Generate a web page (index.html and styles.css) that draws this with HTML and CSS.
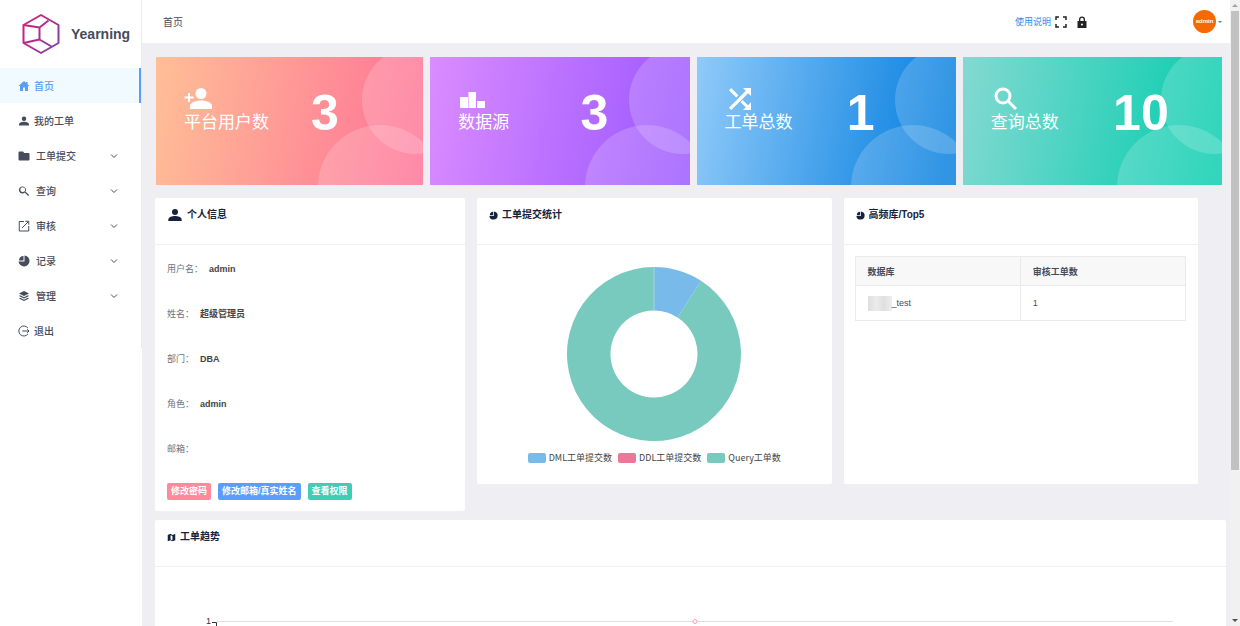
FILE: index.html
```
<!DOCTYPE html>
<html lang="zh-CN">
<head>
<meta charset="utf-8">
<meta name="viewport" content="width=device-width, initial-scale=1.0">
<title>Yearning</title>
<link rel="stylesheet" href="styles.css">
</head>
<body>
<svg class="sprite" aria-hidden="true">
  <symbol id="i-person" viewBox="0 0 24 24"><circle cx="12" cy="7.500" r="4.500"/><path d="M2 21v-2c0-4 6-5.500 10-5.500s10 1.500 10 5.500v2z"/></symbol>
  <symbol id="i-search" viewBox="0 0 24 24"><path d="M16 14.200h-.8l-.4-.4A7 7 0 1 0 14 14.800l.4.4v.8l6 6 1.800-1.800zM9.500 14.200a4.900 4.900 0 1 1 0-9.800 4.900 4.900 0 0 1 0 9.800z"/></symbol>
  <symbol id="i-pie" viewBox="0 0 24 24"><path d="M13 1a11 11 0 1 1-11.900 12H13z"/><path d="M11 2v9H2a9.500 9.500 0 0 1 9-9z"/></symbol>
  <symbol id="i-chevron" viewBox="0 0 10 10"><path d="M2 3.500L5 6.500l3-3" fill="none" stroke="currentColor"/></symbol>
  <symbol id="i-bubbles" viewBox="0 0 120 128"><circle cx="113" cy="43" r="54"/><circle cx="77" cy="130" r="62"/></symbol>
</svg>

<div class="layout">
  <aside class="sidebar">
    <div class="logo">
      <svg class="logo-mark" viewBox="0 0 38 42" fill="none" stroke="url(#lg)" stroke-width="2" stroke-linejoin="round">
        <defs><linearGradient id="lg" gradientUnits="userSpaceOnUse" x1="0" y1="8" x2="38" y2="34"><stop offset="0" stop-color="#d81e78"/><stop offset="1" stop-color="#7c42a4"/></linearGradient></defs>
        <path d="M19 2l17.500 10v18L19 40 1.500 30V12z"/>
        <path d="M1.500 12l16 2.500 9-7M17.500 14.500v12L1.500 30M17.500 26.500l12 7"/>
      </svg>
      <span>Yearning</span>
    </div>
    <nav class="menu">
      <a class="menu-item active" href="#">
        <svg class="icon" viewBox="0 0 24 24"><path d="M12 2L1 12h3v10h6v-7h4v7h6V12h3l-4-3.700V4h-3v1.600z"/></svg>首页</a>
      <a class="menu-item" href="#"><svg class="icon"><use href="#i-person"/></svg>我的工单</a>
      <a class="menu-item sub" href="#">
        <svg class="icon" viewBox="0 0 24 24"><path d="M1 5a2 2 0 0 1 2-2h7l2.500 3H21a2 2 0 0 1 2 2v11a2 2 0 0 1-2 2H3a2 2 0 0 1-2-2z"/></svg>工单提交
        <svg class="chevron"><use href="#i-chevron"/></svg></a>
      <a class="menu-item sub" href="#"><svg class="icon"><use href="#i-search"/></svg>查询
        <svg class="chevron"><use href="#i-chevron"/></svg></a>
      <a class="menu-item sub" href="#">
        <svg class="icon" viewBox="0 0 24 24" fill="none" stroke="currentColor" stroke-width="2"><path d="M12 3H2.500v19h19V12M8 16L21 3M14.500 2.500h7v7"/></svg>审核
        <svg class="chevron"><use href="#i-chevron"/></svg></a>
      <a class="menu-item sub" href="#"><svg class="icon"><use href="#i-pie"/></svg>记录
        <svg class="chevron"><use href="#i-chevron"/></svg></a>
      <a class="menu-item sub" href="#">
        <svg class="icon" viewBox="0 0 24 24"><path d="M12 2L2 7l10 5 10-5z"/><path d="M4.500 10.500L2 12l10 5 10-5-2.500-1.500L12 14.300z"/><path d="M4.500 15.500L2 17l10 5 10-5-2.500-1.500-7.500 3.800z"/></svg>管理
        <svg class="chevron"><use href="#i-chevron"/></svg></a>
      <a class="menu-item" href="#">
        <svg class="icon" viewBox="0 0 24 24" fill="none" stroke="currentColor" stroke-width="2"><path d="M20 6.500A10 10 0 1 0 20 17.500M8.500 12H22M18.500 8.500L22 12l-3.500 3.500"/></svg>退出</a>
    </nav>
  </aside>

  <main class="main">
    <header class="topbar">
      <span class="crumb">首页</span>
      <div class="tools">
        <a class="help" href="#">使用说明</a>
        <button class="tool" type="button" aria-label="全屏"><svg viewBox="0 0 12 12" fill="none" stroke="currentColor" stroke-width="1.500"><path d="M1 4V1h3M8 1h3v3M11 8v3H8M4 11H1V8"/></svg></button>
        <button class="tool lock" type="button" aria-label="锁屏"><svg viewBox="0 0 12 12"><path d="M3 5V3.500a3 3 0 0 1 6 0V5h1.500v7h-9V5zm1.300 0h3.400V3.500a1.700 1.700 0 0 0-3.400 0zM6 7.500a1 1 0 1 0 0 2 1 1 0 0 0 0-2z" fill-rule="evenodd"/></svg></button>
        <button class="user" type="button"><span class="avatar">admin</span><span class="caret"></span></button>
      </div>
    </header>

    <div class="content">
      <section class="cards">
        <div class="card card-users">
          <svg class="bubbles"><use href="#i-bubbles"/></svg>
          <div class="card-label">
            <svg viewBox="0 0 28 24"><circle cx="17" cy="6.500" r="5.500"/><path d="M6 22v-3c0-4 7-5.500 11-5.500s11 1.500 11 5.500v3z"/><path d="M4 6h2v3.500h3.500v2H6V15H4v-3.500H.5v-2H4z"/></svg>
            <span>平台用户数</span>
          </div>
          <strong>3</strong>
        </div>
        <div class="card card-source">
          <svg class="bubbles"><use href="#i-bubbles"/></svg>
          <div class="card-label">
            <svg viewBox="0 0 28 24"><path d="M2 10h8v11H2zM10.500 5h7.500v16h-7.500zM19 14h8v7h-8z"/></svg>
            <span>数据源</span>
          </div>
          <strong>3</strong>
        </div>
        <div class="card card-order">
          <svg class="bubbles"><use href="#i-bubbles"/></svg>
          <div class="card-label">
            <svg viewBox="0 0 28 24"><path d="M6.200 1l7.200 7.200-2.200 2.200L4 3.200zM18 1h8v8l-2.800-2.800L6.200 23 4 20.800 20.800 3.800zM17.600 13l5.400 5.200 3-3V23h-8l2.800-2.800-5.200-5z"/></svg>
            <span>工单总数</span>
          </div>
          <strong>1</strong>
        </div>
        <div class="card card-query">
          <svg class="bubbles"><use href="#i-bubbles"/></svg>
          <div class="card-label">
            <svg viewBox="0 0 28 24" fill="none" stroke="currentColor" stroke-width="3"><circle cx="12" cy="9" r="7"/><path d="M17 14l8 8"/></svg>
            <span>查询总数</span>
          </div>
          <strong>10</strong>
        </div>
      </section>

      <section class="panels">
        <div class="panel">
          <h2 class="panel-head"><svg class="icon-lg"><use href="#i-person"/></svg>个人信息</h2>
          <div class="profile">
            <dl>
              <div><dt>用户名：</dt><dd>admin</dd></div>
              <div><dt>姓名：</dt><dd>超级管理员</dd></div>
              <div><dt>部门：</dt><dd>DBA</dd></div>
              <div><dt>角色：</dt><dd>admin</dd></div>
              <div><dt>邮箱：</dt><dd></dd></div>
            </dl>
            <div class="actions">
              <button class="btn btn-pink" type="button">修改密码</button>
              <button class="btn btn-blue" type="button">修改邮箱/真实姓名</button>
              <button class="btn btn-green" type="button">查看权限</button>
            </div>
          </div>
        </div>

        <div class="panels-right">
          <div class="panel">
            <h2 class="panel-head"><svg class="icon-sm"><use href="#i-pie"/></svg>工单提交统计</h2>
            <div class="pie">
              <svg class="donut" viewBox="0 0 174 174">
                <path fill="#78cabf" d="M134 13.800A87 87 0 1 1 87 0V43.500A43.500 43.500 0 1 0 110.500 50.400z"/>
                <path fill="#78bbea" d="M87 0A87 87 0 0 1 134 13.800L110.500 50.400A43.500 43.500 0 0 0 87 43.500z"/>
                <path stroke="#a3d6dc" d="M87 0v43"/>
              </svg>
              <ul class="legend">
                <li><i class="dml"></i>DML工单提交数</li>
                <li><i class="ddl"></i>DDL工单提交数</li>
                <li><i class="query"></i>Query工单数</li>
              </ul>
            </div>
          </div>

          <div class="panel">
            <h2 class="panel-head"><svg class="icon-sm"><use href="#i-pie"/></svg>高频库/Top5</h2>
            <table class="top5">
              <thead><tr><th>数据库</th><th>审核工单数</th></tr></thead>
              <tbody><tr><td><span class="masked"></span>_test</td><td>1</td></tr></tbody>
            </table>
          </div>
        </div>
      </section>

      <section class="panel trend">
        <h2 class="panel-head"><svg class="icon-sm" viewBox="0 0 24 24"><path fill-rule="evenodd" d="M2 5l7-3 6 3 7-3v17l-7 3-6-3-7 3zm7.500 1v11l5 2V8z"/></svg>工单趋势</h2>
        <svg class="trend-chart" viewBox="0 0 1071 180">
          <text x="51" y="57">1</text>
          <path d="M57 55.500h4.500V180" fill="none" stroke="#333"/>
          <path d="M62 54.500h956" stroke="#ddd"/>
          <circle cx="540" cy="54.500" r="2" fill="#fff" stroke="#f7a1b0"/>
        </svg>
      </section>
    </div>
  </main>

  <div class="scrollbar" aria-hidden="true">
    <span class="arrow up"></span>
    <div class="track"><div class="thumb"></div></div>
    <span class="arrow down"></span>
  </div>
</div>
</body>
</html>
```
FILE: styles.css
```
:root {
  --bg: #efeef2;
  --text: #464c5b;
  --title: #17233d;
  --primary: #5a9cf8;
  --border: #e8eaec;
}
* {
  box-sizing: border-box;
}
body {
  margin: 0;
  background: var(--bg);
  color: var(--text);
  font-family: "Liberation Sans", "Noto Sans CJK SC", sans-serif;
  font-size: 10px;
}
a {
  color: inherit;
  text-decoration: none;
}
button {
  border: none;
  padding: 0;
  background: none;
  font-family: inherit;
  cursor: pointer;
}
svg {
  display: block;
  fill: currentColor;
}
svg[fill="none"] {
  fill: none;
}
.sprite {
  display: none;
}
.layout {
  display: flex;
  height: 100vh;
  overflow: hidden;
}

/* sidebar */
.sidebar {
  width: 142px;
  flex-shrink: 0;
  background: #fff;
}
.logo {
  display: flex;
  align-items: center;
  gap: 11px;
  height: 68px;
  padding-left: 22px;
  border-right: 1px solid var(--border);
  font-size: 14px;
  font-weight: bold;
}
.logo-mark {
  width: 38px;
  height: 42px;
}
.menu {
  border-right: 1px solid var(--border);
}
.menu-item {
  display: flex;
  align-items: center;
  gap: 4px;
  height: 35px;
  padding: 0 22px 0 18px;
  font-weight: 500;
}
.menu-item.sub {
  gap: 6px;
}
.menu-item.active {
  background: #f0faff;
  color: var(--primary);
  border-right: 2px solid var(--primary);
}
.icon {
  width: 12px;
  height: 12px;
}
.chevron {
  width: 10px;
  height: 10px;
  margin-left: auto;
}

/* topbar */
.main {
  flex: 1;
  min-width: 0;
  overflow: hidden;
}
.topbar {
  display: flex;
  align-items: center;
  justify-content: space-between;
  height: 43px;
  padding: 0 8px 0 21px;
  background: #fff;
}
.tools {
  display: flex;
  align-items: center;
}
.help {
  color: #2d8cf0;
  font-size: 9px;
}
.tool {
  width: 12px;
  height: 12px;
  margin-left: 4px;
  color: #222;
}
.tool.lock {
  margin-left: 9px;
}
.user {
  display: flex;
  align-items: center;
  gap: 2px;
  margin-left: 105px;
}
.avatar {
  width: 23px;
  height: 23px;
  border-radius: 50%;
  background: #f56a00;
  color: #fff;
  font-size: 6px;
  font-weight: bold;
  line-height: 23px;
  text-align: center;
}
.caret {
  border: 2px solid transparent;
  border-top-color: #2d8cf0;
  border-bottom: none;
}

/* cards */
.content {
  padding: 14px 4px 0 13px;
}
.cards {
  display: grid;
  grid-template-columns: 267fr 259fr 259fr 259fr;
  gap: 7px;
  padding: 0 4px 0 1px;
}
.card {
  position: relative;
  display: grid;
  grid-template-columns: 58% 42%;
  height: 128px;
  padding: 30px 0 0;
  color: #fff;
}
.card-users { background: linear-gradient(100deg, #ffbf96, #fe7096); }
.card-source { background: linear-gradient(100deg, #da8cff, #9a55ff); }
.card-order { background: linear-gradient(100deg, #90caf9, #047edf 95%); }
.card-query { background: linear-gradient(100deg, #84d9d2, #07cdae 95%); }
.bubbles {
  position: absolute;
  right: 0;
  bottom: 0;
  width: 120px;
  height: 128px;
  fill: #fff;
  fill-opacity: 0.18;
}
.card-label {
  padding-left: 28px;
  font-size: 17px;
  line-height: 24px;
}
.card-label svg {
  width: 28px;
  height: 24px;
}
.card strong {
  font-size: 50px;
  line-height: 52px;
}

/* panels */
.panels {
  display: grid;
  grid-template-columns: 310fr 721fr;
  gap: 12px;
  align-items: start;
  padding: 13px 28px 9px 0;
}
.panels-right {
  display: grid;
  grid-template-columns: 1fr 1fr;
  gap: 12px;
}
.panel {
  background: #fff;
  border-radius: 2px;
}
.panel-head {
  display: flex;
  align-items: center;
  gap: 4px;
  margin: 0;
  padding: 9px 12px 21px;
  border-bottom: 1px solid #f0f0f3;
  color: var(--title);
  font-size: 10px;
  font-weight: 600;
  line-height: 16px;
}
.icon-lg {
  width: 16px;
  height: 16px;
}
.icon-sm {
  width: 9px;
  height: 9px;
}
.profile {
  padding: 1px 12px 11px;
  font-size: 9px;
}
.profile dl {
  margin: 0;
}
.profile dl div {
  display: flex;
  align-items: center;
  gap: 6px;
  height: 45px;
}
.profile dt {
  color: #6b7280;
}
.profile dd {
  margin: 0;
  color: #444;
  font-weight: bold;
}
.actions {
  display: flex;
  gap: 7px;
  padding-top: 12px;
}
.btn {
  height: 17px;
  padding: 0 4px;
  border-radius: 2px;
  color: #fff;
  font-size: 9px;
  font-weight: bold;
  line-height: 17px;
}
.btn-pink { background: #fe8a9c; }
.btn-blue { background: #5c9dfc; }
.btn-green { background: #3fcdb5; }

.pie {
  padding: 22px 0 19px;
}
.donut {
  width: 174px;
  height: 174px;
  margin: 0 auto 10px;
}
.legend {
  display: flex;
  justify-content: center;
  gap: 6px;
  margin: 0;
  padding: 0;
  list-style: none;
  color: #444;
  font-family: "Noto Sans CJK SC", sans-serif;
  font-size: 9px;
  line-height: 14px;
}
.legend li {
  display: flex;
  align-items: center;
  gap: 3px;
}
.legend i {
  width: 18px;
  height: 10px;
  border-radius: 2px;
}
.dml { background: #78bbea; }
.ddl { background: #ee7798; }
.query { background: #78cabf; }

.top5 {
  width: calc(100% - 23px);
  margin: 11px 12px 0 11px;
  border-collapse: collapse;
  table-layout: fixed;
  font-size: 9px;
}
.top5 th,
.top5 td {
  padding: 0 12px;
  border: 1px solid var(--border);
  text-align: left;
}
.top5 th {
  height: 29px;
  background: #f8f8f9;
  font-weight: 600;
}
.top5 td {
  height: 35px;
}
.masked {
  display: inline-block;
  width: 24px;
  height: 15px;
  background: linear-gradient(90deg, #dedede, #ececec 35%, #dfdfdf 65%, #eee);
  vertical-align: middle;
}

.trend-chart {
  width: 100%;
  height: auto;
}
.trend-chart text {
  fill: #333;
  font-size: 9px;
}

/* scrollbar */
.scrollbar {
  display: flex;
  flex-direction: column;
  align-items: center;
  width: 10px;
  flex-shrink: 0;
  background: #f1f1f1;
}
.track {
  flex: 1;
  width: 8px;
}
.thumb {
  height: 76%;
  background: #c1c1c1;
}
.arrow {
  margin: 4px 0;
  border: 3px solid transparent;
}
.arrow.up {
  border-top: none;
  border-bottom-color: #a3a3a3;
}
.arrow.down {
  border-bottom: none;
  border-top-color: #505050;
}
```
